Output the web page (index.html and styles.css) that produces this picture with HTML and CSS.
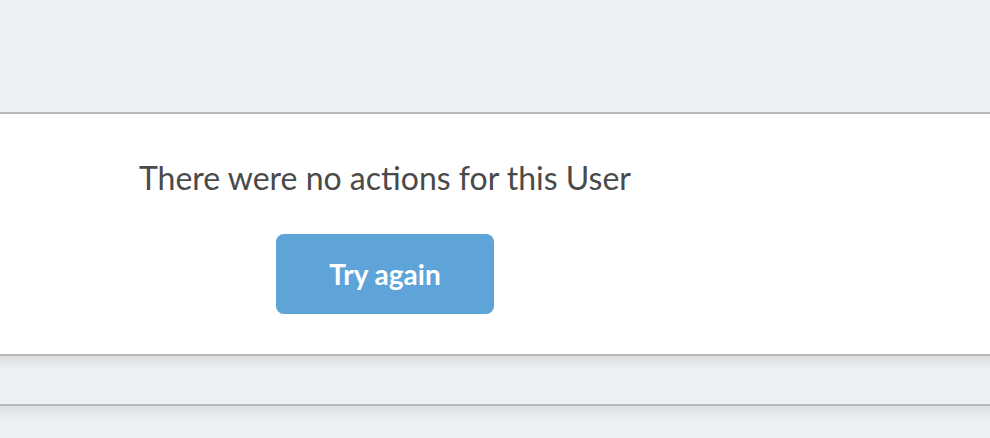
FILE: index.html
```html
<!DOCTYPE html>
<html>
<head>
<meta charset="utf-8">
<link rel="stylesheet" href="styles.css">
</head>
<body>
<div class="top-band"></div>
<section class="panel">
  <div class="empty">
    <p class="empty-text">There were no actions for this User</p>
    <button class="retry">Try again</button>
  </div>
</section>
<div class="gap-band"></div>
<div class="rest-band"></div>
</body>
</html>
```
FILE: styles.css
```css
html, body {
  margin: 0;
  padding: 0;
  background: #edf1f4;
  font-family: Lato, "Open Sans", sans-serif;
  height: 438px;
  overflow: hidden;
}
.top-band {
  height: 112px;
  background: #edf1f4;
}
.panel {
  background: #ffffff;
  border-top: 2px solid #b9b9b9;
  border-bottom: 2px solid #b9b9b9;
  height: 240px;
  box-sizing: content-box;
}
.empty {
  width: 770px;
  display: flex;
  flex-direction: column;
  align-items: center;
  padding-top: 44px;
}
.empty-text {
  margin: 0;
  font-size: 32px;
  line-height: 40px;
  color: #4a4a4a;
}
.retry {
  margin-top: 36px;
  width: 218px;
  height: 80px;
  border: none;
  border-radius: 8px;
  background: #5fa4d9;
  color: #ffffff;
  font-family: Lato, sans-serif;
  font-weight: 700;
  font-size: 28px;
  padding: 0;
}
.gap-band {
  height: 48px;
  background: linear-gradient(#dcdfe2, #edf1f4 14px);
  border-bottom: 2px solid #b9b9b9;
}
.rest-band {
  height: 40px;
  background: linear-gradient(#dcdfe2, #edf1f4 14px);
}
```
